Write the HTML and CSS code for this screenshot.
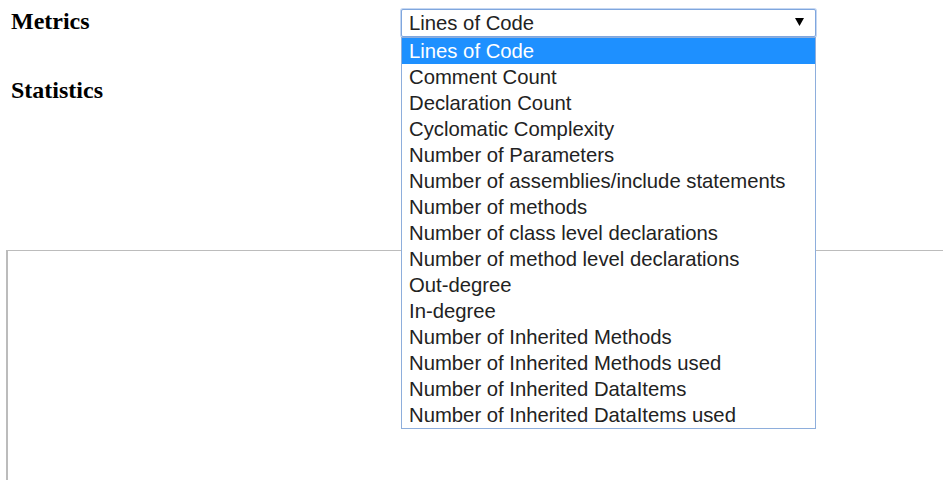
FILE: index.html
```html
<!DOCTYPE html>
<html lang="en">
<head>
<meta charset="utf-8">
<title>Metrics</title>
<link rel="stylesheet" href="styles.css">
</head>
<body>
  <section class="controls">
    <div class="metric-row">
      <h3 class="label">Metrics</h3>
      <div class="picker">
        <div class="picker-field">
          <span class="picker-value">Lines of Code</span>
          <svg class="picker-arrow" width="9" height="8" viewBox="0 0 9 8"><polygon points="0,0 9,0 4.5,8" fill="#000"/></svg>
        </div>
        <ul class="picker-list">
          <li class="picker-option is-active">Lines of Code</li>
          <li class="picker-option">Comment Count</li>
          <li class="picker-option">Declaration Count</li>
          <li class="picker-option">Cyclomatic Complexity</li>
          <li class="picker-option">Number of Parameters</li>
          <li class="picker-option">Number of assemblies/include statements</li>
          <li class="picker-option">Number of methods</li>
          <li class="picker-option">Number of class level declarations</li>
          <li class="picker-option">Number of method level declarations</li>
          <li class="picker-option">Out-degree</li>
          <li class="picker-option">In-degree</li>
          <li class="picker-option">Number of Inherited Methods</li>
          <li class="picker-option">Number of Inherited Methods used</li>
          <li class="picker-option">Number of Inherited DataItems</li>
          <li class="picker-option">Number of Inherited DataItems used</li>
        </ul>
      </div>
    </div>
    <h3 class="label stats-label">Statistics</h3>
  </section>
  <div class="chart-box"></div>
</body>
</html>
```

FILE: styles.css
```css
html, body {
  margin: 0;
  padding: 0;
  overflow: hidden;
  background: #fff;
}

body {
  font-family: "Liberation Sans", Arial, sans-serif;
  color: #222;
}

.controls {
  padding: 7px 0 0 11px;
}

.metric-row {
  display: grid;
  grid-template-columns: 390px 415px;
  align-items: start;
}

.label {
  margin: 0;
  font-family: "Liberation Serif", "Times New Roman", serif;
  font-weight: bold;
  font-size: 24px;
  line-height: 28px;
  color: #000;
}

.stats-label {
  margin-top: 39px;
}

.picker {
  position: relative;
  margin-top: 2px;
}

.picker-field {
  box-sizing: border-box;
  height: 28px;
  border: 1px solid #7fa6de;
  border-radius: 2px;
  box-shadow: 0 0 0 1px #c5d7f2;
  display: flex;
  align-items: center;
  justify-content: space-between;
  padding: 0 11px 0 7px;
  font-size: 20.3px;
  background: #fff;
}

.picker-value {
  line-height: 26px;
}

.picker-arrow {
  display: block;
  margin-top: -3px;
}

.picker-list {
  position: absolute;
  top: 28px;
  left: 0;
  right: 0;
  margin: 0;
  padding: 0;
  list-style: none;
  background: #fff;
  border: 1px solid #8eaedc;
  z-index: 2;
}

.picker-option {
  height: 26px;
  line-height: 26px;
  padding-left: 7px;
  font-size: 20.3px;
  color: #222;
  white-space: nowrap;
}

.picker-option.is-active {
  background: #1e90ff;
  color: #fff;
}

.chart-box {
  box-sizing: border-box;
  margin: 146px 0 0 6px;
  height: 230px;
  border-style: solid;
  border-color: #bcbcbc;
  border-width: 1px 0 0 2px;
}
```
